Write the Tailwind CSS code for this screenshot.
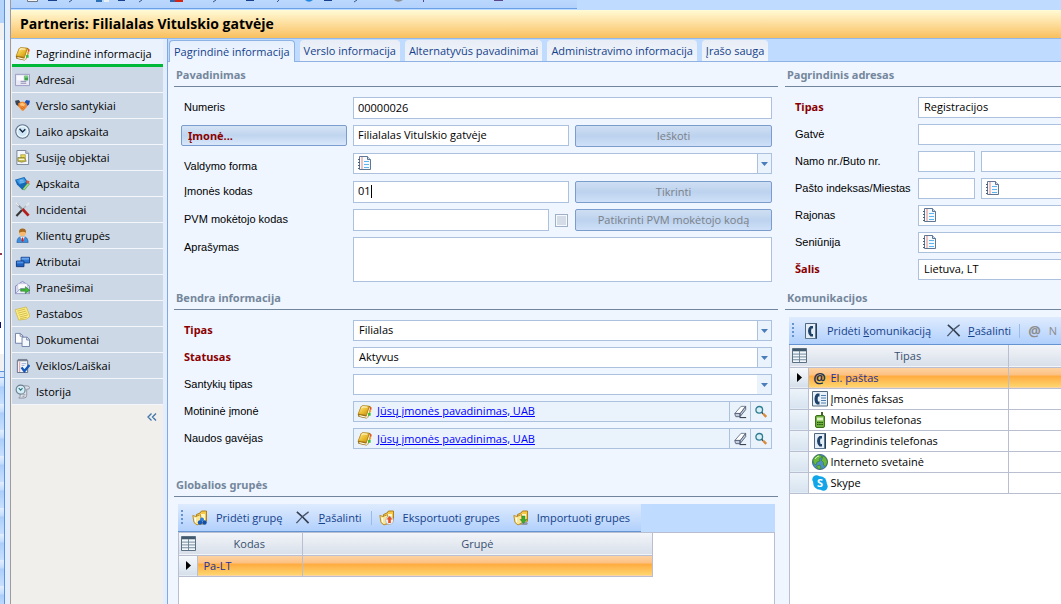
<!DOCTYPE html>
<html lang="lt">
<head>
    <meta charset="UTF-8">
    <meta name="viewport" content="width=device-width, initial-scale=1.0">
    <script src="https://cdn.jsdelivr.net/npm/@tailwindcss/browser@4"></script>
    <title>Partneris: Filialalas Vitulskio gatvėje</title>
</head>
<body class="h-screen overflow-hidden bg-[#bfdbff] font-['Open_Sans','Noto_Sans',sans-serif] text-[11px] leading-[16px] text-black">

    <!-- Shared icons -->
    <svg class="absolute size-0">
        <linearGradient id="gold" x1="0" y1="0" x2="1" y2="1"><stop offset="0" stop-color="#fff0a0"/><stop offset=".55" stop-color="#e9bb2e"/><stop offset="1" stop-color="#c48f12"/></linearGradient>
        <symbol id="i-book" viewBox="0 0 16 16">
            <path d="M1 11 4 3l2-1.500 8 .5 1 2-3 10-2 1.500-8.500-2z" fill="#94680c"/>
            <path d="m2.500 12.500 8 1.700 3.300-10.400" fill="none" stroke="#fdf8dc" stroke-width="1.400"/>
            <path d="M1.300 10.500 4.300 3Q5 1.700 6.500 1.800L13 2.300 10 12z" fill="url(#gold)" stroke="#b98a18" stroke-width=".7"/>
            <path d="M5 4.500 6 3l5 .4" fill="none" stroke="#fffbe0"/>
            <path d="M13.500 3.500h2V6h-2z" fill="#e8501a"/><path d="M13 6.500h2V9h-2z" fill="#f5a623"/><path d="M12 9.500h2.500v3H12z" fill="#2fbe35"/>
        </symbol>
        <symbol id="i-mail" viewBox="0 0 16 16">
            <path d="M.5 2.500h15v12H.5z" fill="#e9e9f6" stroke="#9a9ac0"/><path d="M2 4h7v5H2z" fill="#f9f9ff"/>
            <path d="M10 4h4v5h-4z" fill="#3da24a"/><path d="M10 4h4v2h-4z" fill="#77cf7d"/><path d="M6 10h6M6 12h6" stroke="#8a8aac"/>
        </symbol>
        <symbol id="i-hands" viewBox="0 0 16 16">
            <path d="M0 3 4 2l3 4-3 3-3-2z" fill="#3a4350"/><path d="M16 3 12 2 9 6l3 3 3-2z" fill="#1f4fae"/>
            <path d="M3.500 5.500 7 4h2.500l3 2 .5 3-4 4.500H7.500L3.500 9z" fill="#f08a32"/><path d="m5 6 3-1 3 2-2 2-3-1z" fill="#ffc27a"/><path d="m6 10 3 2M8 9l2.500 2" stroke="#c3601a" stroke-width=".7"/>
        </symbol>
        <symbol id="i-clock" viewBox="0 0 16 16">
            <circle cx="8" cy="8" r="7.200" fill="#e4f1fb" stroke="#5f7690" stroke-width="1.200"/><circle cx="8" cy="8" r="5.500" fill="#cfe6f7" stroke="#fff" stroke-width=".7"/>
            <path d="M4.800 5 8 8.500 11 5.500" fill="none" stroke="#15263c" stroke-width="1.500"/>
        </symbol>
        <symbol id="i-objects" viewBox="0 0 16 16">
            <path d="M2 .5h9.500l3 3v12H2z" fill="#f3f6fb" stroke="#76829a"/><path d="M11.500.500v3h3" fill="#cdd6e6" stroke="#76829a"/>
            <path d="M6 5h5v5l-4 1z" fill="#e9dc55" stroke="#8f8322" stroke-width=".6"/><path d="M3 8h7l2 4-5 1-4-1z" fill="#c7bd50" stroke="#6d6520" stroke-width=".6"/><path d="M4 10h6" stroke="#fff"/>
        </symbol>
        <symbol id="i-account" viewBox="0 0 16 16">
            <path d="M0 4 10 1l4 6-6 8-6-6z" fill="#1668b8"/><path d="M1.500 4.500 9.500 2 12 6 5 9z" fill="#3e9ae2"/><path d="M5 4.500h4M5 6.500h5" stroke="#a9d6f8" stroke-width=".8"/>
            <path d="m8 14 6-7 1.500 1.500L10 15z" fill="#9be07f" stroke="#2c7c2f" stroke-width=".5"/><path d="m12.500 4.500 3 1-1 3-2.500-1z" fill="#e25b3b"/>
        </symbol>
        <symbol id="i-tools" viewBox="0 0 16 16">
            <path d="m1.500 15 6-6.500" stroke="#353535" stroke-width="2.200"/><path d="m8 8 5-5" stroke="#b3b9c0" stroke-width="1.500"/><path d="m12 4 3-3" stroke="#e4e7eb" stroke-width="2"/>
            <path d="m2 2 6 6" stroke="#8a919b" stroke-width="2"/><path d="m8 7.500 6.500 7" stroke="#b3201c" stroke-width="3"/><path d="M1 1 4 4" stroke="#eef0f3" stroke-width="1.500"/>
        </symbol>
        <symbol id="i-person" viewBox="0 0 16 16">
            <path d="M2 15.500Q2 9 8 9t6 6.500z" fill="#3d8fe0" stroke="#185596" stroke-width=".6"/><path d="M5.500 9h5L8 14z" fill="#fff"/><path d="m7.300 10 1.400 0 .5 3.500L8 15l-1.200-1.500z" fill="#d4231c"/>
            <circle cx="8" cy="5" r="3.700" fill="#f6b970"/><path d="M4.300 5Q4 .5 8 .5T11.700 5Q9 3 4.300 5z" fill="#a8691c"/>
        </symbol>
        <symbol id="i-attr" viewBox="0 0 16 16">
            <path d="M6.500 3.500h9v6h-9z" fill="#2f78d4" stroke="#123f8c"/><path d="M7 4h8v2H7z" fill="#6ba6ec"/><path d="M1.500 7.500h8v6h-8z" fill="#1d62c2" stroke="#0e367c"/><path d="M2 8h7v2H2z" fill="#4f93e6"/>
        </symbol>
        <symbol id="i-msg" viewBox="0 0 16 16">
            <path d="M.5 6.500 8 1.500l7.500 5v8H.5z" fill="#d9daf1" stroke="#8486ba"/><path d="M3 4h10v6H3z" fill="#fff" stroke="#b5b6d6" stroke-width=".6"/><path d="m1 14 5-5h4l5 5" fill="#eceefb" stroke="#8486ba" stroke-width=".7"/>
            <path d="M6 9.500h5V7l4.800 4-4.800 3.500V12H6z" fill="#3fb83a" stroke="#1a6c1c" stroke-width=".5"/>
        </symbol>
        <symbol id="i-note" viewBox="0 0 16 16">
            <path d="m0 4 12-3 4 10-4 3-8 1z" fill="#fbee86" stroke="#d0b63c" stroke-width=".8"/><path d="m2.500 5.500 8.500-2.300M3 7.700l9-2.400M4 9.800l9-2.400M5 11.800l9-2.400M5.500 13.500 12.500 12" stroke="#c2a536" stroke-width=".7"/>
        </symbol>
        <symbol id="i-docs" viewBox="0 0 16 16">
            <path d="M.5 1.500h5l3 2.500v8h-8z" fill="#fff" stroke="#6f7fa6"/><path d="M7.500 5.500H13L15.500 8v7.500h-8z" fill="#f4f8ff" stroke="#6f7fa6"/><path d="M12.500 5.500v3h3M5.500 1.500v3h3" fill="none" stroke="#6f7fa6"/>
        </symbol>
        <symbol id="i-tasks" viewBox="0 0 16 16">
            <path d="M2.500 2.500h11v13h-11z" fill="#f2f5fb" stroke="#5f6c86"/><path d="M3 1h10v2.500H3z" fill="#7a8294"/><path d="M5 4v11" stroke="#ea8e8e"/><path d="M7 6h5M7 8h3" stroke="#9ab0d4"/>
            <path d="m7 10 3 4 5.500-6.500" fill="none" stroke="#1559b8" stroke-width="2.600"/>
        </symbol>
        <symbol id="i-history" viewBox="0 0 16 16">
            <path d="M9 2h4q2.500 0 2.500 2t-3 1.500V12q0 3-3 3H4q2-1 1.500-4z" fill="#dde0e7" stroke="#7c8290" stroke-width=".8"/>
            <circle cx="6" cy="6" r="4.800" fill="#d5eef5" stroke="#6b7f90" stroke-width="1.200"/><path d="M4 4.500 6 6.500l2-2" fill="none" stroke="#2a7180" stroke-width="1.200"/><path d="M8 11.500h3M8 13.500h2" stroke="#8b92a2"/>
        </symbol>
        <symbol id="i-list" viewBox="0 0 14 15">
            <path d="M1.500.500h8l3 3v10h-11z" fill="#f5faff" stroke="#5f7795"/><path d="M9.500.500v3h3" fill="#c9dcef" stroke="#5f7795"/>
            <path d="M4 1v12" stroke="#e9b5ad" stroke-width="1.600"/><path d="M6 5.500h5M6 8.500h5M6 11.500h5" stroke="#5eb4ee"/><path d="M0 3.500h2M0 6.500h2M0 9.500h2M0 12.500h2" stroke="#4b607c"/>
        </symbol>
        <symbol id="i-eraser" viewBox="0 0 16 16">
            <path d="M2 10 8.500 2.500h5l-6 8z" fill="#fff" stroke="#6f7c90"/><path d="M2 10h5.500v3.500H3q-1-1.500-1-3.500zM7.500 10.500l6-8V6l-6 7.500z" fill="#c4cddb" stroke="#4b5870" stroke-width=".9"/><path d="M7 14.500h7" stroke="#1d2638"/>
        </symbol>
        <symbol id="i-search" viewBox="0 0 16 16">
            <circle cx="6" cy="5.500" r="3.800" fill="#d9f0f7" stroke="#2f7d92" stroke-width="1.500"/><path d="m9 8.500 1.500 1.500" stroke="#2a4550" stroke-width="1.500"/><path d="m10.500 10 3.500 3.500" stroke="#d98a3a" stroke-width="2.800"/>
        </symbol>
        <symbol id="i-folder" viewBox="0 0 16 16">
            <path d="M4.500 4.500 8 3l1.500-2h5v10l-3 3h-7z" fill="#f6c84a" stroke="#a87610" stroke-width=".9"/><path d="M7 4h6v8H7z" fill="#fff6c4"/><path d="M.8 5.500 4 6.500l4.500-2 1 8-4.500 2.500-3-2.500z" fill="#fbe793" stroke="#b78418" stroke-width=".9"/><path d="M2.500 7.500 4 8v4.500L3 12z" fill="#fff"/>
        </symbol>
        <symbol id="i-x" viewBox="0 0 16 16">
            <path d="M2 2q6 5 12.500 12" fill="none" stroke="#344052" stroke-width="1.800"/><path d="M14.500 2Q7 7 1.500 14" fill="none" stroke="#4a566a" stroke-width="1.400"/>
        </symbol>
        <symbol id="i-grid" viewBox="0 0 16 16">
            <path d="M.5.500h15v15H.5z" fill="#f2f7fb" stroke="#4d6377"/><path d="M1 1h14v2.500H1z" fill="#41586d"/><path d="M1 6.500h14M1 9.500h14M1 12.500h14M8 3v12" stroke="#6d8496"/>
        </symbol>
        <symbol id="i-phone" viewBox="0 0 16 16">
            <path d="M2.500.500h11v15h-11z" fill="#e5eef6" stroke="#51687f"/><path d="M12.500 1v14.500H3" fill="none" stroke="#5c7893"/><path d="M13.500.500v15" stroke="#263d55"/>
            <path d="M10 3H7.500Q5 4.500 5 8t2.500 5.500H10V11H8.500q-1-3 0-5.500H10z" fill="#1e4268"/>
        </symbol>
        <symbol id="i-fax" viewBox="0 0 16 16">
            <path d="M.5.500h15v14.500H.5z" fill="#e9f1f8" stroke="#51687f"/><path d="M7.500 2.500H5Q2.500 4 2.500 8T5 13.500h2.500v-3H6q-.7-2.500 0-5h1.500z" fill="#1e4268"/><path d="M9 4.500h5M9 7h5M9 9.500h5M9 12h5" stroke="#4f7fae"/>
        </symbol>
        <symbol id="i-mobile" viewBox="0 0 16 16">
            <path d="M9 0h2v4H9z" fill="#41651f"/><rect x="3.500" y="3.500" width="9" height="12" rx="1.500" fill="#6fb13e" stroke="#3b6d1b"/><path d="M5 5.500h6v3H5z" fill="#def1c8"/><path d="M5 10.500h6M5 12.500h6" stroke="#26500f" stroke-dasharray="1.500 .7"/>
        </symbol>
        <symbol id="i-globe" viewBox="0 0 16 16">
            <circle cx="8" cy="8" r="7.600" fill="#4b8fc4" stroke="#24506f" stroke-width=".7"/><path d="M1 6Q3 1 8 .8L10 3 7 5l1 2-3 1-1 3-2.500-2zM11 2l3 2 1.500 4-2 4.500-2-1.500V8.500l-2-2zM4.500 12 8 11l1 4-3 0z" fill="#69b93c" stroke="#35741c" stroke-width=".5"/><path d="M3 5q2-3 4-3" stroke="#d5f3bd" fill="none"/>
        </symbol>
        <symbol id="i-down" viewBox="0 0 7 4"><path d="M0 0h7L3.500 4z" fill="#4a7ebb"/></symbol>
    </svg>

    <div class="flex h-full">
        <!-- Edge of the window behind -->
        <div class="flex w-[5px] shrink-0 flex-col border-r border-[#5c93e0] bg-white">
            <div class="h-[23px] bg-[#b5d4fc]"></div>
            <div class="h-[17px] bg-[#f1f1f1]"></div>
            <div class="mt-[213px] h-[2px] w-[2px] bg-[#8c3b52]"></div>
            <div class="mt-[67px] h-[6px] w-[1px] bg-[#0d0d70]"></div>
            <div class="mt-[26px] h-[17px] bg-[#f1f1f1]"></div>
            <div class="h-[7px] border-y border-[#5c93e0] bg-[#d5e5fc]"></div>
            <div class="flex-1 bg-[repeating-linear-gradient(#e4effe_0,#c3dcfd_8px,#abcefa_9px,#c9e0fe_26px)]"></div>
        </div>
        <div class="w-[6px] shrink-0 border-r border-[#9c9c9c] bg-[#e3edfc]"></div>

        <div class="flex min-w-0 flex-1 flex-col">
            <!-- Bottom of the main toolbar -->
            <div class="flex h-[10px] shrink-0">
                <div class="flex h-[9px] w-[566px] items-start border-b border-[#6b9fe6] bg-linear-to-b from-[#bad7fd] to-[#b3d2fc]">
                    <svg class="h-[8px] w-full" viewBox="0 0 566 8" preserveAspectRatio="xMinYMin slice">
                        <path d="M16.500 0v1.500h10V0" fill="#f5f5f5" stroke="#6e7684"/>
                        <path d="M37 .500h9M107 .500h7M235 .500h8M313 .500h8" stroke="#17418f"/>
                        <path d="M61 0l-3 2M131 0l-3 2M205 0l-3 2M268 0l-2 2M346 0l-3 2" stroke="#33558f"/>
                        <path d="M85 0h6v2h-6z" fill="#2c70b5"/><path d="M93 0h5v2h-5z" fill="#e8f0f4"/><path d="M159 0h5v2h-5z" fill="#2f66ad"/><path d="M164 0h8v2h-8z" fill="#d42512"/>
                        <path d="M294 0q4 3.500 8 0z" fill="#2387e2"/><path d="M383 0q4 3.500 9 0z" fill="#8e8f94"/><path d="M412.500 0v2M483 .500h9" stroke="#5a4790"/>
                    </svg>
                </div>
            </div>
            <h1 class="h-[29px] shrink-0 border-b border-[#92b8ea] bg-linear-to-b from-[#fffbd5] to-[#f9bf5c] pl-[9px] font-['Open_Sans'] text-[14px] leading-[28px] font-bold">Partneris: Filialalas Vitulskio gatvėje</h1>

            <div class="flex min-h-0 flex-1">
                <!-- Side navigation -->
                <nav class="w-[152px] shrink-0 bg-[#f0efeb]">
                    <ul class="ml-px">
                        <li><a href="#" class="flex h-[28px] items-center gap-[6px] border-b-[3px] border-[#00b838] bg-[#eaf2fd] pt-1 pl-[3px]"><svg class="size-[15px]"><use href="#i-book"/></svg>Pagrindinė informacija</a></li>
                        <li><a href="#" class="flex h-[26px] items-center gap-[6px] border-b border-[#f3f6fa] bg-[#cdd8e6] pl-[3px]"><svg class="size-[15px]"><use href="#i-mail"/></svg>Adresai</a></li>
                        <li><a href="#" class="flex h-[26px] items-center gap-[6px] border-b border-[#f3f6fa] bg-[#cdd8e6] pl-[3px]"><svg class="size-[15px]"><use href="#i-hands"/></svg>Verslo santykiai</a></li>
                        <li><a href="#" class="flex h-[26px] items-center gap-[6px] border-b border-[#f3f6fa] bg-[#cdd8e6] pl-[3px]"><svg class="size-[15px]"><use href="#i-clock"/></svg>Laiko apskaita</a></li>
                        <li><a href="#" class="flex h-[26px] items-center gap-[6px] border-b border-[#f3f6fa] bg-[#cdd8e6] pl-[3px]"><svg class="size-[15px]"><use href="#i-objects"/></svg>Susiję objektai</a></li>
                        <li><a href="#" class="flex h-[26px] items-center gap-[6px] border-b border-[#f3f6fa] bg-[#cdd8e6] pl-[3px]"><svg class="size-[15px]"><use href="#i-account"/></svg>Apskaita</a></li>
                        <li><a href="#" class="flex h-[26px] items-center gap-[6px] border-b border-[#f3f6fa] bg-[#cdd8e6] pl-[3px]"><svg class="size-[15px]"><use href="#i-tools"/></svg>Incidentai</a></li>
                        <li><a href="#" class="flex h-[26px] items-center gap-[6px] border-b border-[#f3f6fa] bg-[#cdd8e6] pl-[3px]"><svg class="size-[15px]"><use href="#i-person"/></svg>Klientų grupės</a></li>
                        <li><a href="#" class="flex h-[26px] items-center gap-[6px] border-b border-[#f3f6fa] bg-[#cdd8e6] pl-[3px]"><svg class="size-[15px]"><use href="#i-attr"/></svg>Atributai</a></li>
                        <li><a href="#" class="flex h-[26px] items-center gap-[6px] border-b border-[#f3f6fa] bg-[#cdd8e6] pl-[3px]"><svg class="size-[15px]"><use href="#i-msg"/></svg>Pranešimai</a></li>
                        <li><a href="#" class="flex h-[26px] items-center gap-[6px] border-b border-[#f3f6fa] bg-[#cdd8e6] pl-[3px]"><svg class="size-[15px]"><use href="#i-note"/></svg>Pastabos</a></li>
                        <li><a href="#" class="flex h-[26px] items-center gap-[6px] border-b border-[#f3f6fa] bg-[#cdd8e6] pl-[3px]"><svg class="size-[15px]"><use href="#i-docs"/></svg>Dokumentai</a></li>
                        <li><a href="#" class="flex h-[26px] items-center gap-[6px] border-b border-[#f3f6fa] bg-[#cdd8e6] pl-[3px]"><svg class="size-[15px]"><use href="#i-tasks"/></svg>Veiklos/Laiškai</a></li>
                        <li><a href="#" class="flex h-[26px] items-center gap-[6px] border-b border-[#f3f6fa] bg-[#cdd8e6] pl-[3px]"><svg class="size-[15px]"><use href="#i-history"/></svg>Istorija</a></li>
                    </ul>
                    <div class="flex justify-end pt-[8px] pr-[6px]">
                        <button type="button" aria-label="Suskleisti"><svg class="h-[8px] w-[10px]" viewBox="0 0 10 8" fill="none" stroke="#3f74ac" stroke-width="1.300"><path d="M4.500.500 1 4l3.500 3.500M9 .500 5.500 4 9 7.500"/></svg></button>
                    </div>
                </nav>
                <div class="w-[4px] shrink-0 bg-[#e3edfc]"></div>

                <main class="flex min-w-0 flex-1 flex-col border-l border-[#7ea9e3] bg-[#eff6ff]">
                    <!-- Tabs -->
                    <div role="tablist" class="flex h-[23px] shrink-0 items-end gap-[5px] border-b border-[#8db2e3] bg-[#bfdbff] pl-px text-[#15428b]">
                        <button type="button" role="tab" aria-selected="true" class="-mb-px h-[22px] rounded-t-sm border border-b-0 border-[#8db2e3] bg-linear-to-b from-[#e6f0fd] to-[#eff6ff] px-[4px]">Pagrindinė informacija</button>
                        <button type="button" role="tab" class="h-[21px] rounded-t-sm bg-linear-to-b from-[#e9eef6] to-[#f0f5fc] px-[4px]">Verslo informacija</button>
                        <button type="button" role="tab" class="h-[21px] rounded-t-sm bg-linear-to-b from-[#e9eef6] to-[#f0f5fc] px-[4px]">Alternatyvūs pavadinimai</button>
                        <button type="button" role="tab" class="h-[21px] rounded-t-sm bg-linear-to-b from-[#e9eef6] to-[#f0f5fc] px-[4px]">Administravimo informacija</button>
                        <button type="button" role="tab" class="h-[21px] rounded-t-sm bg-linear-to-b from-[#e9eef6] to-[#f0f5fc] px-[4px]">Įrašo sauga</button>
                    </div>

                    <form class="grid min-h-0 flex-1 grid-cols-[minmax(0,604fr)_minmax(0,276fr)] gap-[7px] pl-[6px]">
                        <div class="flex min-h-0 flex-col">
                            <h2 class="h-[25px] shrink-0 border-b border-[#71859c] pl-[2px] font-['Noto_Sans'] leading-[26px] font-bold text-[#75879c]">Pavadinimas</h2>
                            <div class="flex flex-col gap-[6px] pt-[10px] pr-[6px] pl-[7px] font-['Liberation_Sans']">
                                <div class="flex h-[22px] items-center">
                                    <label for="numeris" class="w-[172px] shrink-0 pb-[2px] pl-[3px]">Numeris</label>
                                    <input id="numeris" value="00000026" class="h-full min-w-0 flex-1 border border-[#abc1de] bg-white px-[4px] pb-[2px] font-['Open_Sans']">
                                </div>
                                <div class="flex h-[22px] items-start">
                                    <button type="button" class="mr-[6px] h-[21px] w-[166px] shrink-0 rounded-xs border border-[#7a9dce] bg-linear-to-b from-[#d6e4f5] via-[#c0d5ef] to-[#d9e7fb] pl-[6px] text-left font-['Noto_Sans'] font-bold text-[#8b0000]">Įmonė...</button>
                                    <div class="grid min-w-0 flex-1 grid-cols-[minmax(0,216fr)_minmax(0,197fr)] gap-[6px]">
                                        <input aria-label="Įmonė" value="Filialalas Vitulskio gatvėje" class="h-[21px] border border-[#abc1de] bg-white px-[4px] pb-[2px] font-['Open_Sans']">
                                        <button type="button" disabled class="h-[22px] rounded-xs border border-[#7a9dce] bg-linear-to-b from-[#cfdff3] via-[#bcd2ee] to-[#cfe0f8] font-['Open_Sans'] text-[#7b8087]">Ieškoti</button>
                                    </div>
                                </div>
                                <div class="flex h-[22px] items-start">
                                    <label for="forma" class="w-[172px] shrink-0 pt-[5px] pl-[3px]">Valdymo forma</label>
                                    <div class="flex h-[21px] min-w-0 flex-1 items-center border border-[#abc1de] bg-white pl-[4px]">
                                        <svg class="h-[15px] w-[14px] shrink-0"><use href="#i-list"/></svg>
                                        <select id="forma" class="min-w-0 flex-1 appearance-none"><option></option></select>
                                        <span class="flex h-full w-[14px] items-center justify-center border-l border-[#abc1de] bg-[#eaf2fc]"><svg class="h-[4px] w-[7px]"><use href="#i-down"/></svg></span>
                                    </div>
                                </div>
                                <div class="flex h-[22px] items-center">
                                    <label for="kodas" class="w-[172px] shrink-0 pb-[2px] pl-[3px]">Įmonės kodas</label>
                                    <div class="grid h-full min-w-0 flex-1 grid-cols-[minmax(0,216fr)_minmax(0,197fr)] gap-[6px]">
                                        <div class="flex items-center border border-[#abc1de] bg-white pb-[2px] pl-[4px]">
                                            <input id="kodas" value="01" class="field-sizing-content font-['Open_Sans'] outline-none">
                                            <span class="h-[13px] w-px bg-black"></span>
                                        </div>
                                        <button type="button" disabled class="rounded-xs border border-[#7a9dce] bg-linear-to-b from-[#cfdff3] via-[#bcd2ee] to-[#cfe0f8] font-['Open_Sans'] text-[#7b8087]">Tikrinti</button>
                                    </div>
                                </div>
                                <div class="flex h-[22px] items-center">
                                    <label for="pvm" class="w-[172px] shrink-0 pb-[2px] pl-[3px]">PVM mokėtojo kodas</label>
                                    <div class="grid h-full min-w-0 flex-1 grid-cols-[minmax(0,216fr)_minmax(0,197fr)] gap-[6px]">
                                        <div class="flex items-center gap-[6px]">
                                            <input id="pvm" class="h-full min-w-0 flex-1 border border-[#abc1de] bg-white px-[4px] font-['Open_Sans']">
                                            <input type="checkbox" disabled aria-label="PVM mokėtojas" class="mr-px size-[13px] appearance-none border border-[#9fb0c6] bg-[#d3dce7] ring-1 ring-[#f5f9ff] ring-inset">
                                        </div>
                                        <button type="button" disabled class="rounded-xs border border-[#7a9dce] bg-linear-to-b from-[#cfdff3] via-[#bcd2ee] to-[#cfe0f8] font-['Open_Sans'] text-[#7b8087]">Patikrinti PVM mokėtojo kodą</button>
                                    </div>
                                </div>
                                <div class="flex h-[45px] items-start">
                                    <label for="aprasymas" class="w-[172px] shrink-0 pt-[2px] pl-[3px]">Aprašymas</label>
                                    <textarea id="aprasymas" class="h-full min-w-0 flex-1 resize-none border border-[#abc1de] bg-white px-[4px]"></textarea>
                                </div>
                            </div>

                            <h2 class="mt-[3px] h-[25px] shrink-0 border-b border-[#71859c] pl-[2px] font-['Noto_Sans'] leading-[26px] font-bold text-[#75879c]">Bendra informacija</h2>
                            <div class="flex flex-col gap-[6px] pt-[10px] pr-[6px] pl-[7px] font-['Liberation_Sans']">
                                <div class="flex h-[21px] items-center">
                                    <label for="tipas" class="w-[172px] shrink-0 pb-[2px] pl-[3px] font-['Noto_Sans'] font-bold text-[#8b0000]">Tipas</label>
                                    <div class="flex h-full min-w-0 flex-1 items-center border border-[#abc1de] bg-white pl-[5px]">
                                        <select id="tipas" class="min-w-0 flex-1 appearance-none pb-[2px] font-['Open_Sans']"><option>Filialas</option></select>
                                        <span class="flex h-full w-[14px] items-center justify-center border-l border-[#abc1de] bg-[#eaf2fc]"><svg class="h-[4px] w-[7px]"><use href="#i-down"/></svg></span>
                                    </div>
                                </div>
                                <div class="flex h-[21px] items-center">
                                    <label for="statusas" class="w-[172px] shrink-0 pb-[2px] pl-[3px] font-['Noto_Sans'] font-bold text-[#8b0000]">Statusas</label>
                                    <div class="flex h-full min-w-0 flex-1 items-center border border-[#abc1de] bg-white pl-[5px]">
                                        <select id="statusas" class="min-w-0 flex-1 appearance-none pb-[2px] font-['Open_Sans']"><option>Aktyvus</option></select>
                                        <span class="flex h-full w-[14px] items-center justify-center border-l border-[#abc1de] bg-[#eaf2fc]"><svg class="h-[4px] w-[7px]"><use href="#i-down"/></svg></span>
                                    </div>
                                </div>
                                <div class="flex h-[21px] items-center">
                                    <label for="santykiai" class="w-[172px] shrink-0 pb-[2px] pl-[3px]">Santykių tipas</label>
                                    <div class="flex h-full min-w-0 flex-1 items-center border border-[#abc1de] bg-white pl-[5px]">
                                        <select id="santykiai" class="min-w-0 flex-1 appearance-none font-['Open_Sans']"><option></option></select>
                                        <span class="flex h-full w-[14px] items-center justify-center bg-[#eaf2fc]"><svg class="h-[4px] w-[7px]"><use href="#i-down"/></svg></span>
                                    </div>
                                </div>
                                <div class="flex h-[21px] items-center">
                                    <span class="w-[172px] shrink-0 pb-[2px] pl-[3px]">Motininė įmonė</span>
                                    <div class="flex h-full min-w-0 flex-1 items-center border border-[#abc1de] bg-[#eaf2fc] pl-[3px]">
                                        <svg class="mr-[5px] size-[15px] shrink-0"><use href="#i-book"/></svg>
                                        <a href="#" class="min-w-0 flex-1 pb-[2px] font-['Open_Sans'] text-[#0000ff] underline">Jūsų įmonės pavadinimas, UAB</a>
                                        <button type="button" aria-label="Valyti" class="flex h-full w-[21px] items-center justify-center border-l border-[#abc1de]"><svg class="size-[15px]"><use href="#i-eraser"/></svg></button>
                                        <button type="button" aria-label="Ieškoti" class="flex h-full w-[21px] items-center justify-center border-l border-[#abc1de]"><svg class="size-[14px]"><use href="#i-search"/></svg></button>
                                    </div>
                                </div>
                                <div class="flex h-[21px] items-center">
                                    <span class="w-[172px] shrink-0 pb-[2px] pl-[3px]">Naudos gavėjas</span>
                                    <div class="flex h-full min-w-0 flex-1 items-center border border-[#abc1de] bg-[#eaf2fc] pl-[3px]">
                                        <svg class="mr-[5px] size-[15px] shrink-0"><use href="#i-book"/></svg>
                                        <a href="#" class="min-w-0 flex-1 font-['Open_Sans'] text-[#0000ff] underline">Jūsų įmonės pavadinimas, UAB</a>
                                        <button type="button" aria-label="Valyti" class="flex h-full w-[21px] items-center justify-center border-l border-[#abc1de]"><svg class="size-[15px]"><use href="#i-eraser"/></svg></button>
                                        <button type="button" aria-label="Ieškoti" class="flex h-full w-[21px] items-center justify-center border-l border-[#abc1de]"><svg class="size-[14px]"><use href="#i-search"/></svg></button>
                                    </div>
                                </div>
                            </div>

                            <h2 class="mt-[23px] h-[25px] shrink-0 border-b border-[#71859c] pl-[2px] font-['Noto_Sans'] leading-[26px] font-bold text-[#75879c]">Globalios grupės</h2>
                            <div class="mt-[7px] mr-[3px] ml-[4px] flex min-h-0 flex-1 flex-col">
                                <div class="h-[28px] shrink-0 bg-[#bfdbff]">
                                    <div class="flex h-[28px] w-[463px] items-center border-b border-[#6593cf] bg-linear-to-b from-[#deebfe] to-[#b1d0fc] pl-[3px] whitespace-nowrap text-[#15428b]">
                                        <span class="mr-[9px] h-[15px] w-[2px] bg-[repeating-linear-gradient(#6593cf_0_2px,transparent_2px_4px)]"></span>
                                        <button type="button" class="mr-[13px] flex items-center gap-[8px]"><svg class="size-[16px]" viewBox="0 0 16 16"><use href="#i-folder"/><circle cx="10" cy="9.500" r="2" fill="#2c7ddd"/><circle cx="8" cy="12.500" r="2.200" fill="#1459b8"/><circle cx="12.500" cy="12.500" r="2.200" fill="#0f4da6"/></svg>Pridėti grupę</button>
                                        <button type="button" class="mr-[9px] flex items-center gap-[8px]"><svg class="size-[15px]"><use href="#i-x"/></svg><span><u>P</u>ašalinti</span></button>
                                        <span class="mr-[7px] h-[14px] w-px bg-[#9abcea]"></span>
                                        <button type="button" class="mr-[13px] flex items-center gap-[8px]"><svg class="size-[16px]" viewBox="0 0 16 16"><use href="#i-folder"/><circle cx="10.500" cy="10.500" r="4" fill="#eef1f6" stroke="#9fa8b8" stroke-width=".6"/><path d="m10.500 6 3 3.500h-1.700V13H9.200V9.500H7.500z" fill="#e2501c"/></svg>Eksportuoti grupes</button>
                                        <button type="button" class="flex items-center gap-[8px]"><svg class="size-[16px]" viewBox="0 0 16 16"><use href="#i-folder"/><path d="M8 13q3-3 7 0l-1 2H9z" fill="#9199a8"/><path d="m10.500 13.500-3.500-4h2V6h3v3.500h2z" fill="#3fab2e" stroke="#1c741c" stroke-width=".4"/></svg>Importuoti grupes</button>
                                    </div>
                                </div>
                                <div class="min-h-0 flex-1 border-t border-r border-l border-[#b9bfd0] bg-white">
                                    <table class="w-[474px] table-fixed border-collapse text-left">
                                        <thead>
                                            <tr class="h-[22px] border-b border-[#b9bfd0] bg-linear-to-b from-[#f2f5f9] to-[#d9e0ea] text-[#39506f]">
                                                <th class="w-[18px] pl-[2px]"><svg class="size-[15px]"><use href="#i-grid"/></svg></th>
                                                <th class="w-[105px] border-r border-[#b9bfd0] text-center font-normal">Kodas</th>
                                                <th class="border-r border-[#b9bfd0] text-center font-normal">Grupė</th>
                                            </tr>
                                        </thead>
                                        <tbody>
                                            <tr class="h-[21px] border-b border-[#b9bfd0] bg-[linear-gradient(#fdd5a6_0,#fcc183_8px,#ffab3f_9px,#fed972_21px)] text-[#1c2f9c]">
                                                <td class="border-r border-[#b9bfd0] bg-linear-to-b from-[#f8fafc] to-[#d5dfea]"><svg class="ml-[7px] h-[9px] w-[5px]" viewBox="0 0 5 9"><path d="m0 0 5 4.500L0 9z"/></svg></td>
                                                <td class="border-r border-[#b9bfd0] pl-[6px]">Pa-LT</td>
                                                <td class="border-r border-[#b9bfd0]"></td>
                                            </tr>
                                        </tbody>
                                    </table>
                                </div>
                            </div>
                        </div>

                        <div class="flex min-h-0 flex-col">
                            <h2 class="h-[25px] shrink-0 border-b border-[#71859c] pl-[2px] font-['Noto_Sans'] leading-[26px] font-bold text-[#75879c]">Pagrindinis adresas</h2>
                            <div class="flex flex-col gap-[6px] pt-[10px] pl-[10px] font-['Liberation_Sans']">
                                <div class="flex h-[21px] items-center">
                                    <label for="atipas" class="w-[123px] shrink-0 pb-[2px] font-['Noto_Sans'] font-bold text-[#8b0000]">Tipas</label>
                                    <select id="atipas" class="h-full min-w-0 flex-1 appearance-none border border-r-0 border-[#abc1de] bg-white px-[5px] pb-[2px] font-['Open_Sans']"><option>Registracijos</option></select>
                                </div>
                                <div class="flex h-[21px] items-center">
                                    <label for="gatve" class="w-[123px] shrink-0 pb-[2px]">Gatvė</label>
                                    <input id="gatve" class="h-full min-w-0 flex-1 border border-r-0 border-[#abc1de] bg-white px-[5px]">
                                </div>
                                <div class="flex h-[21px] items-center">
                                    <label for="namas" class="w-[123px] shrink-0 pb-[2px]">Namo nr./Buto nr.</label>
                                    <input id="namas" class="mr-[6px] h-full w-[57px] border border-[#abc1de] bg-white px-[5px]">
                                    <input aria-label="Buto nr." class="h-full min-w-0 flex-1 border border-r-0 border-[#abc1de] bg-white px-[5px]">
                                </div>
                                <div class="flex h-[21px] items-center">
                                    <label for="indeksas" class="w-[123px] shrink-0 pb-[2px]">Pašto indeksas/Miestas</label>
                                    <input id="indeksas" class="mr-[6px] h-full w-[57px] border border-[#abc1de] bg-white px-[5px]">
                                    <div class="flex h-full min-w-0 flex-1 items-center border border-r-0 border-[#abc1de] bg-white pl-[4px]">
                                        <svg class="h-[15px] w-[14px] shrink-0"><use href="#i-list"/></svg>
                                        <select aria-label="Miestas" class="min-w-0 flex-1 appearance-none"><option></option></select>
                                    </div>
                                </div>
                                <div class="flex h-[21px] items-center">
                                    <label for="rajonas" class="w-[123px] shrink-0 pb-[2px]">Rajonas</label>
                                    <div class="flex h-full min-w-0 flex-1 items-center border border-r-0 border-[#abc1de] bg-white pl-[4px]">
                                        <svg class="h-[15px] w-[14px] shrink-0"><use href="#i-list"/></svg>
                                        <select id="rajonas" class="min-w-0 flex-1 appearance-none"><option></option></select>
                                    </div>
                                </div>
                                <div class="flex h-[21px] items-center">
                                    <label for="seniunija" class="w-[123px] shrink-0 pb-[2px]">Seniūnija</label>
                                    <div class="flex h-full min-w-0 flex-1 items-center border border-r-0 border-[#abc1de] bg-white pl-[4px]">
                                        <svg class="h-[15px] w-[14px] shrink-0"><use href="#i-list"/></svg>
                                        <select id="seniunija" class="min-w-0 flex-1 appearance-none"><option></option></select>
                                    </div>
                                </div>
                                <div class="flex h-[21px] items-center">
                                    <label for="salis" class="w-[123px] shrink-0 pb-[2px] font-['Noto_Sans'] font-bold text-[#8b0000]">Šalis</label>
                                    <select id="salis" class="h-full min-w-0 flex-1 appearance-none border border-r-0 border-[#abc1de] bg-white px-[5px] pb-[2px] font-['Open_Sans']"><option>Lietuva, LT</option></select>
                                </div>
                            </div>

                            <h2 class="mt-[5px] h-[25px] shrink-0 border-b border-[#71859c] pl-[2px] font-['Noto_Sans'] leading-[26px] font-bold text-[#75879c]">Komunikacijos</h2>
                            <div class="mt-[7px] ml-[4px] flex min-h-0 flex-1 flex-col overflow-hidden">
                                <div class="flex h-[28px] shrink-0 items-center border-b border-[#6593cf] bg-linear-to-b from-[#deebfe] to-[#b1d0fc] pl-[3px] whitespace-nowrap text-[#15428b]">
                                    <span class="mr-[9px] h-[15px] w-[2px] shrink-0 bg-[repeating-linear-gradient(#6593cf_0_2px,transparent_2px_4px)]"></span>
                                    <button type="button" class="mr-[15px] flex shrink-0 items-center gap-[8px]"><svg class="size-[16px]"><use href="#i-phone"/></svg><span>Pridėti <u>k</u>omunikaciją</span></button>
                                    <button type="button" class="mr-[8px] flex shrink-0 items-center gap-[7px]"><svg class="size-[15px]"><use href="#i-x"/></svg><span><u>P</u>ašalinti</span></button>
                                    <span class="mr-[8px] h-[14px] w-px shrink-0 bg-[#9abcea]"></span>
                                    <button type="button" disabled class="flex shrink-0 items-center gap-[8px] text-[#8d8d8d]"><span class="text-[14px] font-bold">@</span>N</button>
                                </div>
                                <div class="min-h-0 flex-1 border-l border-[#b9bfd0] bg-white">
                                    <table class="w-full table-fixed border-collapse text-left">
                                        <thead>
                                            <tr class="h-[22px] border-b border-[#b9bfd0] bg-linear-to-b from-[#f2f5f9] to-[#d9e0ea] text-[#39506f]">
                                                <th class="w-[18px] pl-[2px]"><svg class="size-[15px]"><use href="#i-grid"/></svg></th>
                                                <th class="w-[200px] border-r border-[#b9bfd0] text-center font-normal">Tipas</th>
                                                <th></th>
                                            </tr>
                                        </thead>
                                        <tbody>
                                            <tr class="h-[21px] border-b border-[#b9bfd0] bg-[linear-gradient(#fdd5a6_0,#fcc183_8px,#ffab3f_9px,#fed972_21px)] text-[#1c2f9c]">
                                                <td class="border-r border-[#b9bfd0] bg-linear-to-b from-[#f8fafc] to-[#d5dfea]"><svg class="ml-[7px] h-[9px] w-[5px]" viewBox="0 0 5 9"><path d="m0 0 5 4.500L0 9z"/></svg></td>
                                                <td class="border-r border-[#b9bfd0] pl-[3px]"><span class="flex items-center gap-[3px]"><span class="w-[16px] text-center text-[14px] leading-[16px] font-bold text-[#1d3550]">@</span>El. paštas</span></td>
                                                <td></td>
                                            </tr>
                                            <tr class="h-[21px] border-b border-[#b9bfd0]">
                                                <td class="border-r border-[#b9bfd0] bg-linear-to-b from-[#edf4fa] to-[#d7e3f0]"></td>
                                                <td class="border-r border-[#b9bfd0] pl-[3px]"><span class="flex items-center gap-[3px]"><svg class="size-[16px]"><use href="#i-fax"/></svg>Įmonės faksas</span></td>
                                                <td></td>
                                            </tr>
                                            <tr class="h-[21px] border-b border-[#b9bfd0]">
                                                <td class="border-r border-[#b9bfd0] bg-linear-to-b from-[#edf4fa] to-[#d7e3f0]"></td>
                                                <td class="border-r border-[#b9bfd0] pl-[3px]"><span class="flex items-center gap-[3px]"><svg class="size-[16px]"><use href="#i-mobile"/></svg>Mobilus telefonas</span></td>
                                                <td></td>
                                            </tr>
                                            <tr class="h-[21px] border-b border-[#b9bfd0]">
                                                <td class="border-r border-[#b9bfd0] bg-linear-to-b from-[#edf4fa] to-[#d7e3f0]"></td>
                                                <td class="border-r border-[#b9bfd0] pl-[3px]"><span class="flex items-center gap-[3px]"><svg class="size-[16px]"><use href="#i-phone"/></svg>Pagrindinis telefonas</span></td>
                                                <td></td>
                                            </tr>
                                            <tr class="h-[21px] border-b border-[#b9bfd0]">
                                                <td class="border-r border-[#b9bfd0] bg-linear-to-b from-[#edf4fa] to-[#d7e3f0]"></td>
                                                <td class="border-r border-[#b9bfd0] pl-[3px]"><span class="flex items-center gap-[3px]"><svg class="size-[16px]"><use href="#i-globe"/></svg>Interneto svetainė</span></td>
                                                <td></td>
                                            </tr>
                                            <tr class="h-[21px] border-b border-[#b9bfd0]">
                                                <td class="border-r border-[#b9bfd0] bg-linear-to-b from-[#edf4fa] to-[#d7e3f0]"></td>
                                                <td class="border-r border-[#b9bfd0] pl-[3px]"><span class="flex items-center gap-[3px]"><svg class="size-[16px]" viewBox="0 0 16 16"><circle cx="8" cy="8" r="6.800" fill="#12a5e8"/><circle cx="4.500" cy="4.500" r="4.200" fill="#12a5e8"/><circle cx="11.500" cy="11.500" r="4.200" fill="#12a5e8"/><text x="8" y="12" text-anchor="middle" font-size="11" font-weight="bold" fill="#fff">S</text></svg>Skype</span></td>
                                                <td></td>
                                            </tr>
                                        </tbody>
                                    </table>
                                </div>
                            </div>
                        </div>
                    </form>
                </main>
            </div>
        </div>
    </div>
</body>
</html>
